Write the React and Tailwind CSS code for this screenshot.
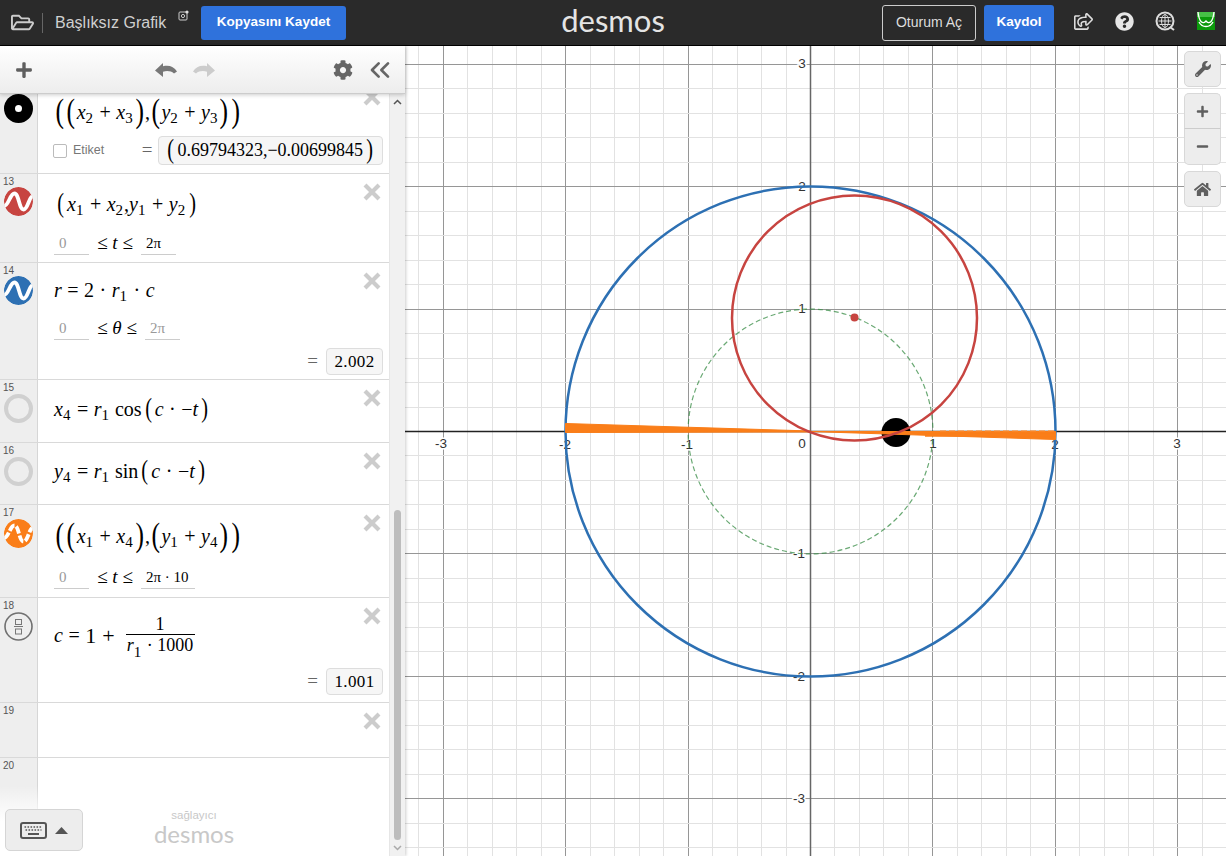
import { FaCog, FaHome, FaPlus, FaMinus, FaQuestionCircle, FaRegFolderOpen, FaWrench, FaRegShareSquare } from 'react-icons/fa';
import { LuChevronsLeft } from 'react-icons/lu';

const OX = 810.5;
const OY = 431.5;
const UNIT = 122.4;
const MINOR = UNIT / 5;

const range = (from, to) => Array.from({ length: to - from + 1 }, (_, i) => from + i);
const snap = (v) => Math.round(v - 0.5) + 0.5;

const xLabels = [
  { t: '-3', x: 441, y: 448 },
  { t: '-2', x: 565, y: 449 },
  { t: '-1', x: 687, y: 449 },
  { t: '0', x: 802, y: 448 },
  { t: '1', x: 933, y: 448 },
  { t: '2', x: 1055, y: 449 },
  { t: '3', x: 1177, y: 448 },
  { t: '3', x: 802, y: 68 },
  { t: '2', x: 802, y: 191 },
  { t: '1', x: 802, y: 313 },
  { t: '-1', x: 799, y: 558 },
  { t: '-2', x: 799, y: 681 },
  { t: '-3', x: 799, y: 803 },
];

function Graph() {
  const vx = range(-17, 17);
  const vy = range(-20, 21);
  return (
    <svg className="block w-full h-full" viewBox="405 46 821 810">
      {vx.map((i) => (
        <line key={i} x1={snap(OX + i * MINOR)} x2={snap(OX + i * MINOR)} y1="46" y2="856" stroke={i % 5 === 0 ? '#969696' : '#e2e2e2'} shapeRendering="crispEdges" />
      ))}
      {vy.map((i) => (
        <line key={i} y1={snap(OY - i * MINOR)} y2={snap(OY - i * MINOR)} x1="405" x2="1226" stroke={i % 5 === 0 ? '#969696' : '#e2e2e2'} shapeRendering="crispEdges" />
      ))}
      <line x1={OX} x2={OX} y1="46" y2="856" stroke="#666" strokeWidth="1.5" />
      <line y1={OY} y2={OY} x1="405" x2="1226" stroke="#222" strokeWidth="1.5" />
      {xLabels.map((l, i) => (
        <text key={i} x={l.x} y={l.y} textAnchor="middle" fontSize="13.5" fontFamily="Liberation Sans, Arial, sans-serif" fill="#333" stroke="#fff" strokeWidth="3" paintOrder="stroke">{l.t}</text>
      ))}
      <circle cx={OX} cy={OY} r="122.4" fill="none" stroke="#388c46" strokeWidth="1.2" strokeDasharray="5 3" opacity="0.75" />
      <circle cx={OX} cy={OY} r="245" fill="none" stroke="#2d70b3" strokeWidth="2.5" />
      <circle cx="896" cy="432.5" r="14.5" fill="#000" />
      <path d="M565.5 423.5 L565.5 432.5 L811 432 L811 431 Z" fill="#fa7e19" stroke="#fa7e19" strokeWidth="1" />
      <path d="M810 431.5 L1055.5 431.5 L1055.5 439.5 Z" fill="#fa7e19" stroke="#fa7e19" strokeWidth="1" />
      <line x1="925" y1="435" x2="1056" y2="435" stroke="#fa7e19" strokeWidth="3.5" />
      <line x1="940" y1="430.8" x2="1056" y2="430.8" stroke="#fb9a4c" strokeWidth="1" strokeDasharray="6 3" />
      <circle cx="854.5" cy="318" r="122.5" fill="none" stroke="#c74440" strokeWidth="2.5" />
      <circle cx="854.5" cy="317.5" r="4" fill="#c74440" />
    </svg>
  );
}

function V({ children }) {
  return <i className="italic">{children}</i>;
}

function S({ children }) {
  return <span className="text-[15px] relative top-[6px] mr-[1px] font-['Liberation_Serif',serif] not-italic">{children}</span>;
}

function P({ children, big }) {
  return <span className={big ? "text-[34px] font-light leading-none relative top-[-1px] scale-x-75 inline-block" : "text-[27px] font-light leading-none relative top-[-1px] scale-x-75 inline-block px-[2px]"}>{children}</span>;
}

function Op({ children }) {
  return <span className="mx-[5.5px]">{children}</span>;
}

function Wave({ color, dashed }) {
  return (
    <svg width="29" height="29" viewBox="0 0 29 29" className="block rounded-full">
      <circle cx="14.5" cy="14.5" r="14.5" fill={color} />
      <path d="M0 19 C4.5 19 6 6.5 10.5 6.5 C15 6.5 15 22.5 19.5 22.5 C24 22.5 25 9 29 9" fill="none" stroke="#fff" strokeWidth="3.8" strokeDasharray={dashed ? '7.5 2' : undefined} />
    </svg>
  );
}

function Dot() {
  return (
    <svg width="29" height="29" viewBox="0 0 29 29" className="block">
      <circle cx="14.5" cy="14.5" r="14.5" fill="#000" />
      <circle cx="14.5" cy="14.5" r="3.5" fill="#fff" />
    </svg>
  );
}

function Empty() {
  return <div className="w-[29px] h-[29px] rounded-full border-[4px] border-[#d0d0d0] bg-[#eee]" />;
}

function FracIcon() {
  return (
    <svg width="29" height="29" viewBox="0 0 29 29" className="block">
      <circle cx="14.5" cy="14.5" r="13.5" fill="#eee" stroke="#707070" strokeWidth="1.6" />
      <rect x="11.5" y="7.5" width="6" height="5" fill="none" stroke="#777" />
      <line x1="10" x2="19" y1="14.5" y2="14.5" stroke="#777" />
      <rect x="11.5" y="17" width="6" height="5" fill="none" stroke="#777" />
    </svg>
  );
}

function Close({ top = 'top-[9px]' }) {
  return (
    <svg width="18" height="18" viewBox="0 0 18 18" className={`absolute right-[8px] ${top}`}>
      <path d="M2 2 L16 16 M16 2 L2 16" stroke="#ccc" strokeWidth="4.2" />
    </svg>
  );
}

function Row({ num, icon, h, tight, closeTop, children, className = '' }) {
  return (
    <div className={`relative flex shrink-0 border-b border-[#d9d9d9] ${h} ${className}`}>
      <div className="w-[38px] shrink-0 bg-[#eeeeee] border-r border-[#d6d6d6]">
        <div className={`${tight ? 'h-[13px]' : 'h-[14px]'} pl-[3px] pt-[2px] text-[10px] leading-[11px] text-[#555]`}>{num}</div>
        <div className="pl-[4px]">{icon}</div>
      </div>
      <div className="flex-1 min-w-0 pl-[16px] pr-[6px] font-['Liberation_Serif',serif] text-[20px] text-black">{children}</div>
      <Close top={closeTop} />
    </div>
  );
}

function Expr({ mt, children }) {
  return <div className={`flex items-center h-[40px] whitespace-pre ${mt}`}>{children}</div>;
}

function Field({ w, gray, children }) {
  return <div className={`h-[26px] border-b border-[#ccc] pl-[5px] leading-[28px] text-[15px] whitespace-pre ${w} ${gray ? 'text-[#999]' : 'text-black'}`}>{children}</div>;
}

function Bounds({ mt, v, vw, max, maxW, maxGray }) {
  return (
    <div className={`flex ${mt}`}>
      <Field w="w-[35px]" gray>0</Field>
      <div className={`${vw} text-center text-[19px] leading-[28px] whitespace-pre`}>≤ <V>{v}</V> ≤</div>
      <Field w={maxW} gray={maxGray}>{max}</Field>
    </div>
  );
}

function Result({ mt, children }) {
  return (
    <div className={`flex items-center justify-end ${mt}`}>
      <span className="text-[19px] text-[#666] mr-[8px]">=</span>
      <div className="h-[27px] w-[57px] rounded-[4px] border border-[#ddd] bg-[#f6f6f6] text-center text-[17px] leading-[26px] tracking-[0.4px]">{children}</div>
    </div>
  );
}

function SideButton({ children, className = '' }) {
  return <div className={`w-[37px] flex items-center justify-center bg-[#ededed] border border-[#d8d8d8] rounded-[5px] text-[#5f5f5f] ${className}`}>{children}</div>;
}

function Undo({ color, flip }) {
  return (
    <svg width="22" height="14" viewBox="0 0 22 14" className={flip ? '-scale-x-100' : ''}>
      <path d="M0 7.5 L8 0 V3.2 C14 1.8 19 3.5 22 8.5 L19 10.5 C16 8 12 7.5 8 8.8 V14 Z" fill={color} />
    </svg>
  );
}

export default function App() {
  return (
    <div className="w-[1226px] h-[856px] overflow-hidden flex flex-col font-['Liberation_Sans',Arial,sans-serif] bg-white">
      {/* Header */}
      <header className="h-[46px] shrink-0 bg-[#2a2a2a] border-b border-black flex items-center text-[#ddd]">
        <FaRegFolderOpen size={23} className="ml-[11px] text-[#ccc]" />
        <div className="w-px h-[20px] bg-[#666] ml-[8px]" />
        <span className="ml-[12px] text-[16px] text-[#d0d0d0] w-[111px] whitespace-nowrap">Başlıksız Grafik</span>
        <svg width="11" height="11" viewBox="0 0 11 11" className="ml-[12px] mb-[14px]">
          <rect x="1" y="2" width="8" height="8" rx="1" fill="none" stroke="#ccc" />
          <circle cx="5" cy="6" r="1.6" fill="none" stroke="#ccc" />
          <circle cx="9" cy="2" r="1.6" fill="#ddd" />
        </svg>
        <button className="ml-[12px] w-[145px] h-[34px] rounded-[3px] bg-[#2f72dc] text-white text-[13.5px] font-bold">Kopyasını Kaydet</button>
        <div className="ml-[214px] w-[106px] text-center font-['Lato',sans-serif] font-normal text-[31px] leading-none text-[#e4e4e4] mb-[4px] whitespace-nowrap">desmos</div>
        <button className="ml-[216px] w-[94px] h-[36px] rounded-[3px] border border-[#ccc] text-[14px] text-[#ddd]">Oturum Aç</button>
        <button className="ml-[8px] w-[70px] h-[36px] rounded-[3px] bg-[#2f72dc] text-white text-[13.5px] font-bold">Kaydol</button>
        <FaRegShareSquare size={19} className="ml-[20px] mb-[3px] text-[#ddd]" />
        <FaQuestionCircle size={19} className="ml-[22px] mb-[3px] text-[#e6e6e6]" />
        <svg width="20" height="20" viewBox="0 0 20 20" className="ml-[21px] mb-[3px]">
          <circle cx="10" cy="10" r="8.5" fill="none" stroke="#ddd" strokeWidth="2" />
          <ellipse cx="10" cy="10" rx="3.5" ry="6.5" fill="none" stroke="#ddd" />
          <path d="M3.5 10 H16.5 M4.5 6.5 H15.5 M4.5 13.5 H15.5 M10 3.5 V16.5" stroke="#ddd" />
          <path d="M15 16 L19 19" stroke="#ddd" strokeWidth="2" />
        </svg>
        <svg width="18" height="18" viewBox="0 0 18 18" className="ml-[22px] mb-[3px]">
          <rect width="18" height="18" fill="#0b9a0b" />
          <rect width="18" height="5" fill="#46c046" />
          <path d="M1 0 C2 10 6 13 9 9 C12 13 16 10 17 0 M2 10 C5 16 13 16 16 10" fill="none" stroke="#fff" strokeWidth="1.3" />
        </svg>
      </header>

      <div className="flex-1 min-h-0 flex">
        {/* Expression list */}
        <aside className="relative w-[405px] shrink-0 flex flex-col shadow-[1px_0_3px_rgba(0,0,0,0.2)] z-10 bg-white">
          <div className="relative z-20 h-[48px] shrink-0 flex items-center border-b border-[#ccc] bg-gradient-to-b from-white to-[#ededed] shadow-[0_1px_4px_rgba(0,0,0,0.2)] text-[#666]">
            <FaPlus size={18} className="ml-[15px] text-[#5f5f5f]" />
            <div className="ml-[122px]"><Undo color="#777" /></div>
            <div className="ml-[16px]"><Undo color="#ccc" flip /></div>
            <FaCog size={20} className="ml-[118px] text-[#666]" />
            <LuChevronsLeft size={32} strokeWidth={2} className="ml-[11px] text-[#666]" />
          </div>

          <div className="flex-1 min-h-0 flex overflow-hidden">
            <div className="w-[389px] shrink-0 flex flex-col overflow-hidden">
              <div className="-mt-[21px] flex flex-col">
                <Row num="" h="h-[101px]" icon={<div className="mt-[7px]"><Dot /></div>} closeTop="top-[15px]">
                  <Expr mt="mt-[19px]">
                    <P big>(</P><P big>(</P><V>x</V><S>2</S><Op>+</Op><V>x</V><S>3</S><P big>)</P>,<P big>(</P><V>y</V><S>2</S><Op>+</Op><V>y</V><S>3</S><P big>)</P><P big>)</P>
                  </Expr>
                  <div className="flex items-center mt-[4px]">
                    <div className="-ml-[1px] w-[14px] h-[14px] rounded-[2px] border border-[#bbb] bg-white" />
                    <span className="ml-[6px] w-[69px] font-['Liberation_Sans',sans-serif] text-[12.5px] text-[#777]">Etiket</span>
                    <span className="text-[19px] text-[#666]">=</span>
                    <div className="ml-[5px] h-[29px] w-[226px] rounded-[4px] border border-[#ddd] bg-[#f6f6f6] flex items-center justify-center text-[18px] whitespace-pre"><P>(</P>0.69794323,−0.00699845<P>)</P></div>
                  </div>
                </Row>
                <Row num="13" tight h="h-[89px]" icon={<Wave color="#c74440" />}>
                  <Expr mt="mt-[10px]">
                    <P>(</P><V>x</V><S>1</S><Op>+</Op><V>x</V><S>2</S>,<V>y</V><S>1</S><Op>+</Op><V>y</V><S>2</S><P>)</P>
                  </Expr>
                  <Bounds mt="mt-[5px]" v="t" vw="w-[52px]" max="2π" maxW="w-[35px]" />
                </Row>
                <Row num="14" tight h="h-[117px]" icon={<Wave color="#2d70b3" />}>
                  <Expr mt="mt-[7px]">
                    <V>r</V><Op>=</Op>2<Op>·</Op><V>r</V><S>1</S><Op>·</Op><V>c</V>
                  </Expr>
                  <Bounds mt="mt-[4px]" v="θ" vw="w-[56px]" max="2π" maxW="w-[35px]" maxGray />
                  <Result mt="mt-[5px]">2.002</Result>
                </Row>
                <Row num="15" h="h-[63px]" icon={<Empty />}>
                  <Expr mt="mt-[9px]">
                    <V>x</V><S>4</S><Op>=</Op><V>r</V><S>1</S> cos<P>(</P><V>c</V><Op>·</Op>−<V>t</V><P>)</P>
                  </Expr>
                </Row>
                <Row num="16" h="h-[62px]" icon={<Empty />}>
                  <Expr mt="mt-[8px]">
                    <V>y</V><S>4</S><Op>=</Op><V>r</V><S>1</S> sin<P>(</P><V>c</V><Op>·</Op>−<V>t</V><P>)</P>
                  </Expr>
                </Row>
                <Row num="17" h="h-[93px]" icon={<Wave color="#fa7e19" dashed />}>
                  <Expr mt="mt-[11px]">
                    <P big>(</P><P big>(</P><V>x</V><S>1</S><Op>+</Op><V>x</V><S>4</S><P big>)</P>,<P big>(</P><V>y</V><S>1</S><Op>+</Op><V>y</V><S>4</S><P big>)</P><P big>)</P>
                  </Expr>
                  <Bounds mt="mt-[7px]" v="t" vw="w-[52px]" max="2π · 10" maxW="w-[54px]" />
                </Row>
                <Row num="18" h="h-[105px]" icon={<FracIcon />}>
                  <div className="flex items-center h-[50px] mt-[12px] whitespace-pre">
                    <V>c</V><Op>=</Op><span className="text-[22px]">1</span><span className="mx-[6px] text-[22px]">+</span>
                    <div className="ml-[5px] w-[69px] flex flex-col items-center text-[18px] leading-[20px]">
                      <div className="w-full text-center border-b border-black">1</div>
                      <div className="whitespace-pre"><V>r</V><S>1</S> · 1000</div>
                    </div>
                  </div>
                  <Result mt="mt-[7px]">1.001</Result>
                </Row>
                <Row num="19" h="h-[55px]" icon={null} />
                <Row num="20" h="h-[100px] border-b-0" icon={null} closeTop="hidden" />
              </div>
            </div>

            {/* Scrollbar */}
            <div className="w-[16px] shrink-0 bg-[#f1f1f1] border-l border-[#e6e6e6] flex flex-col items-center relative">
              <svg width="9" height="6" viewBox="0 0 9 6" className="mt-[5px]"><path d="M1 5 L4.5 1.5 L8 5" fill="none" stroke="#555" strokeWidth="1.5" /></svg>
              <div className="w-[7px] h-[330px] mt-[405px] rounded-full bg-[#bdbdbd]" />
              <svg width="9" height="6" viewBox="0 0 9 6" className="mt-[5px]"><path d="M1 1 L4.5 4.5 L8 1" fill="none" stroke="#aaa" strokeWidth="1.5" /></svg>
            </div>
          </div>

          {/* Bottom fade, keyboard and credit over the list */}
          <div className="absolute left-0 bottom-0 w-[389px] h-[70px] bg-gradient-to-b from-white/0 via-white to-white" />
          <div className="absolute left-[5px] bottom-[5px] w-[78px] h-[42px] rounded-[5px] border border-[#d5d5d5] bg-[#ededed] flex items-center justify-center gap-[8px]">
            <svg width="27" height="17" viewBox="0 0 27 17">
              <rect x="1" y="1" width="25" height="15" rx="2" fill="none" stroke="#555" strokeWidth="2" />
              <path d="M4.5 5 H22.5 M5.5 8 H21.5" stroke="#555" strokeWidth="1.5" strokeDasharray="1.6 1.4" />
              <path d="M8 12 H19" stroke="#555" strokeWidth="2" />
            </svg>
            <svg width="13" height="7" viewBox="0 0 13 7"><path d="M6.5 0 L13 7 H0 Z" fill="#555" /></svg>
          </div>
          <div className="absolute left-[150px] bottom-[10px] w-[88px] flex flex-col items-center text-[#c8c8c8]">
            <span className="text-[11.5px] leading-[14px]">sağlayıcı</span>
            <span className="font-['Lato',sans-serif] text-[24px] leading-[24px]">desmos</span>
          </div>
        </aside>

        {/* Graph paper */}
        <main className="relative flex-1 min-w-0">
          <Graph />
          <div className="absolute top-[5px] right-[5px] flex flex-col gap-[6px]">
            <SideButton className="h-[36px]"><FaWrench size={16} /></SideButton>
            <div className="flex flex-col">
              <SideButton className="h-[36px] rounded-b-none border-b-[#ccc]"><FaPlus size={13} /></SideButton>
              <SideButton className="h-[36px] rounded-t-none border-t-0"><FaMinus size={13} /></SideButton>
            </div>
            <SideButton className="h-[36px]"><FaHome size={17} /></SideButton>
          </div>
        </main>
      </div>
    </div>
  );
}
